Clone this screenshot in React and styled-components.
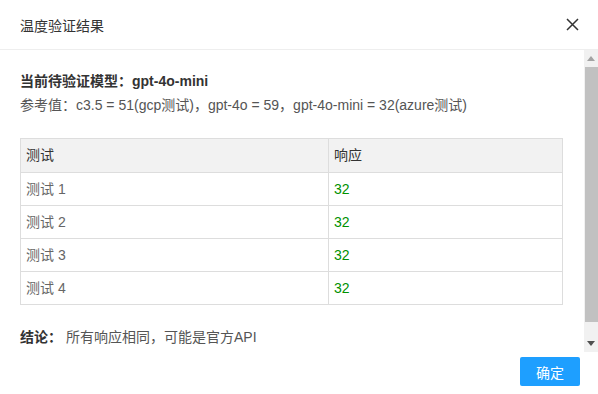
import React from "react";
import styled, { createGlobalStyle } from "styled-components";

const GlobalStyle = createGlobalStyle`
	html, body {
		margin: 0;
		padding: 0;
		background: #fff;
	}
	body {
		font-family: "Liberation Sans", "Noto Sans CJK SC", sans-serif;
		font-size: 14px;
		color: #333;
	}
`;

const Dialog = styled.div`
	width: 598px;
	height: 394px;
	display: flex;
	flex-direction: column;
	background: #fff;
	overflow: hidden;
`;

const Header = styled.div`
	height: 49px;
	flex-shrink: 0;
	display: flex;
	align-items: center;
	justify-content: space-between;
	padding: 0 16px 0 20px;
	border-bottom: 1px solid #eee;
	font-size: 14px;
	color: #333;
`;

const Close = styled.button`
	width: 20px;
	height: 20px;
	padding: 0;
	border: none;
	background: none;
	display: flex;
	align-items: center;
	justify-content: center;
	cursor: pointer;
`;

const Body = styled.div`
	height: 302px;
	flex-shrink: 0;
	display: flex;
`;

const Content = styled.div`
	flex: 1;
	overflow: hidden;
	padding: 20px 21px 0 20px;
`;

const Model = styled.div`
	font-weight: bold;
	line-height: 23px;
	color: #333;
`;

const Reference = styled.div`
	line-height: 25px;
	color: #555;
`;

const Table = styled.table`
	width: 100%;
	margin-top: 20px;
	border-collapse: collapse;
	font-size: 14px;
`;

const Th = styled.th`
	text-align: left;
	font-weight: normal;
	color: #333;
	background: #f2f2f2;
	border: 1px solid #ddd;
	padding: 8px 5px;
	line-height: 17px;
	width: ${(props) => props.width || "auto"};
`;

const Td = styled.td`
	border: 1px solid #ddd;
	padding: 8px 5px;
	line-height: 16px;
	color: ${(props) => (props.ok ? "#009100" : "#666")};
`;

const Conclusion = styled.div`
	margin-top: 21px;
	line-height: 22px;
	color: #555;
`;

const Label = styled.span`
	font-weight: bold;
	color: #333;
	margin-right: 4px;
`;

const Scrollbar = styled.div`
	width: 14px;
	flex-shrink: 0;
	background: #f1f1f1;
	display: flex;
	flex-direction: column;
`;

const Arrow = styled.div`
	height: 17px;
	flex-shrink: 0;
	display: flex;
	align-items: center;
	justify-content: center;
`;

const Thumb = styled.div`
	height: 255px;
	margin-left: 1px;
	background: #c1c1c1;
`;

const Spacer = styled.div`
	flex: 1;
`;

const Footer = styled.div`
	flex: 1;
	display: flex;
	justify-content: flex-end;
	align-items: flex-start;
	padding: 5px 18px 0 0;
`;

const Button = styled.button`
	height: 29px;
	width: 60px;
	padding: 0;
	border: none;
	border-radius: 2px;
	background: #1e9fff;
	color: #fff;
	font-family: inherit;
	font-size: 14px;
	cursor: pointer;
`;

const rows = [
	{ name: "测试 1", value: "32" },
	{ name: "测试 2", value: "32" },
	{ name: "测试 3", value: "32" },
	{ name: "测试 4", value: "32" },
];

const App = () => (
	<>
		<GlobalStyle />
		<Dialog>
			<Header>
				<span>温度验证结果</span>
				<Close aria-label="关闭">
					<svg width="13" height="13" viewBox="0 0 13 13">
						<path d="M1 1L12 12M12 1L1 12" stroke="#333" strokeWidth="1.5" />
					</svg>
				</Close>
			</Header>
			<Body>
				<Content>
					<Model>当前待验证模型：gpt-4o-mini</Model>
					<Reference>
						参考值：c3.5 = 51(gcp测试)，gpt-4o = 59，gpt-4o-mini = 32(azure测试)
					</Reference>
					<Table>
						<thead>
							<tr>
								<Th width="297px">测试</Th>
								<Th>响应</Th>
							</tr>
						</thead>
						<tbody>
							{rows.map((row) => (
								<tr key={row.name}>
									<Td>{row.name}</Td>
									<Td ok>{row.value}</Td>
								</tr>
							))}
						</tbody>
					</Table>
					<Conclusion>
						<Label>结论：</Label>所有响应相同，可能是官方API
					</Conclusion>
				</Content>
				<Scrollbar>
					<Arrow>
						<svg width="8" height="5" viewBox="0 0 8 5">
							<path d="M0 5L4 0L8 5Z" fill="#a3a3a3" />
						</svg>
					</Arrow>
					<Thumb />
					<Spacer />
					<Arrow>
						<svg width="8" height="5" viewBox="0 0 8 5">
							<path d="M0 0L8 0L4 5Z" fill="#505050" />
						</svg>
					</Arrow>
				</Scrollbar>
			</Body>
			<Footer>
				<Button>确定</Button>
			</Footer>
		</Dialog>
	</>
);

export default App;
